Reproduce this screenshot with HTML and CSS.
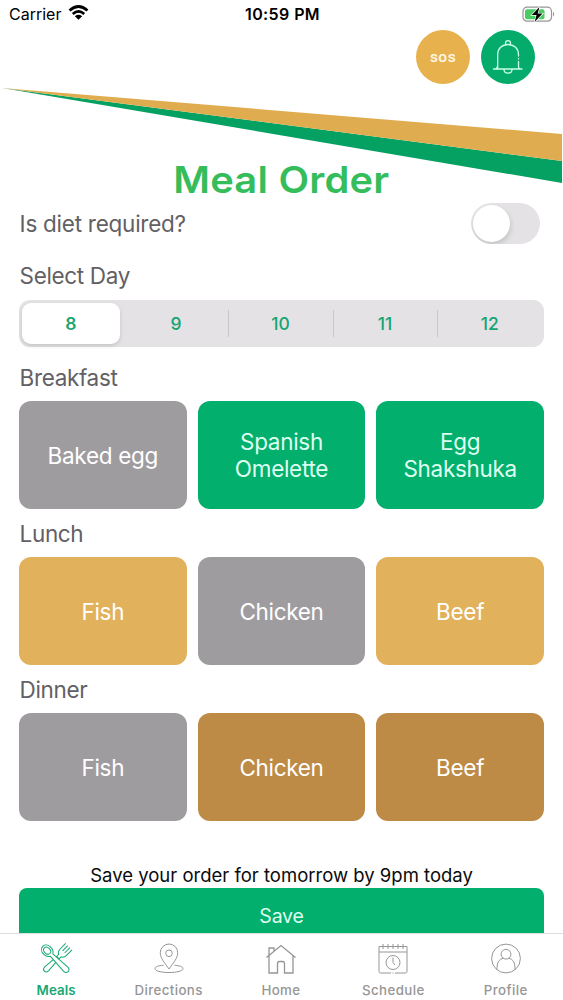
FILE: index.html
```html
<!DOCTYPE html>
<html lang="en">
<head>
<meta charset="utf-8">
<title>Meal Order</title>
<link rel="stylesheet" href="styles.css">
</head>
<body>
<div class="app">
  <svg class="swoosh" width="563" height="100" viewBox="0 0 563 100">
    <path d="M2 3 562 76V98Z" fill="#05a163"/>
    <path d="M2 3 562 49V76Z" fill="#dfad50"/>
  </svg>
  <header class="status">
    <div class="carrier"><span class="carrier-name">Carrier</span>
      <svg width="21" height="16" viewBox="0 0 22 16" fill="none" stroke="#000" stroke-width="2.9"><path d="M1.6 5.4Q11-3 20.4 5.4M5 9Q11 3.6 17 9"/><path d="M11 15.2 7.2 11.5Q11 8.4 14.8 11.5Z" fill="#000" stroke="none"/></svg>
    </div>
    <div class="time">10:59 PM</div>
    <svg class="battery" width="34" height="17" viewBox="0 0 34 17"><rect x="1" y="1.2" width="28.5" height="14" rx="4" fill="#fff" stroke="#969696" stroke-width="1.2"/><rect x="3" y="3.2" width="19.5" height="10" rx="2" fill="#4acb63"/><path d="M31.2 5.8q2 2.4 0 4.8z" fill="#777"/><path d="M17.4 1 9.8 9.1h4.7L12.7 16l7.8-8.4h-4.800z" fill="#000" stroke="#fff" stroke-width="1.3" paint-order="stroke"/></svg>
  </header>
  <div class="actions">
    <div class="round sos">sos</div>
    <div class="round alert">
      <svg width="32" height="36" viewBox="0 0 32 36" fill="none" stroke="#c9ffe6" stroke-width="1.3" stroke-linecap="round"><path d="M1.5 30H30M5.700 30V15.500C5.700 9.500 10 5.500 16 5.500S26.500 9.500 26.500 15.500V17M26.500 19.500v.4M26.500 22.500V27q0 3 1.500 3M5.700 26q0 3-2 4M13.500 5.500V4.200a2.500 2.500 0 0 1 5 0v1.300M12 30.500c0 4.800 8 4.800 8 0"/></svg>
    </div>
  </div>
  <h1 class="title"><span>Meal Order</span></h1>
  <main class="form">
    <div class="diet"><span class="label t-diet">Is diet required?</span><div class="toggle"><div class="knob"></div></div></div>
    <div class="label t-day">Select Day</div>
    <div class="days"><div class="day on">8</div><div class="day">9</div><div class="day">10</div><div class="day">11</div><div class="day">12</div></div>
    <div class="label meal-name t-break">Breakfast</div>
    <div class="meals"><div class="meal grey">Baked egg</div><div class="meal green"><span>Spanish<br>Omelette</span></div><div class="meal green"><span>Egg<br>Shakshuka</span></div></div>
    <div class="label meal-name">Lunch</div>
    <div class="meals"><div class="meal gold">Fish</div><div class="meal grey">Chicken</div><div class="meal gold">Beef</div></div>
    <div class="label meal-name">Dinner</div>
    <div class="meals"><div class="meal grey">Fish</div><div class="meal brown">Chicken</div><div class="meal brown">Beef</div></div>
    <p class="note">Save your order for tomorrow by 9pm today</p>
    <div class="save">Save</div>
  </main>
  <nav class="tabs">
    <div class="tab active"><svg width="34" height="34" viewBox="0 0 34 34"><g transform="translate(17.500 17) rotate(45)"><path d="M-1.500-2-2.700 14q0 3.200 2.700 3.200T2.700 14L1.500-2"/><path d="M-4.500-17.500V-10q0 4 2.800 5.200V-2H1.700V-4.800Q4.500-6 4.500-10V-17.500M-1.500-17.500V-10M1.500-17.500V-10"/></g><g transform="translate(16.500 17) rotate(-45)"><path d="M0-18c-3 0-5 2.800-5 6.200 0 3 1.400 5.300 3.300 6.300L-2.900 14.500q0 3.300 2.900 3.300T2.900 14.500L1.700-5.500C3.600-6.500 5-8.800 5-11.800 5-15.200 3-18 0-18Z" fill="#fff"/><path d="M0-15.800c-1.800 0-3 1.800-3 4s1.300 4 3 4 3-1.800 3-4-1.200-4-3-4Z"/></g></svg><span>Meals</span></div>
    <div class="tab"><svg width="34" height="34" viewBox="0 0 34 34"><path d="M17 27C12 20 8.300 16 8.300 10.700a8.700 8.700 0 0 1 17.400 0C25.700 16 22 20 17 27ZM11.500 23.200C6.500 23.700 3 24.700 3 26.500 3 29 9 30.500 17 30.500s14-1.500 14-4c0-1.800-3.500-2.800-8.500-3.300"/><circle cx="17" cy="11.300" r="3.300"/></svg><span>Directions</span></div>
    <div class="tab"><svg class="house" width="34" height="34" viewBox="0 0 34 34"><path d="M2.500 15.500 17 3.500 31.500 15.500M5 13.500V6h5v3.300M5 13.500V31h8.500V21.500q0-2 2-2h3q2 0 2 2V31H29V13.500"/></svg><span>Home</span></div>
    <div class="tab"><svg width="34" height="34" viewBox="0 0 34 34"><path d="M15 31H4.500q-1.500 0-1.500-1.500V4.500H31V29.500q0 1.500-1.500 1.500H19M16.500 31h1M3 10H31M7 2v5M12 2v5M17 2v5M22 2v5M27 2v5M17 15.500v5l2 2.500"/><circle cx="17" cy="20.500" r="7"/></svg><span>Schedule</span></div>
    <div class="tab"><svg width="34" height="34" viewBox="0 0 34 34"><circle cx="17" cy="16.500" r="14.400"/><circle cx="17" cy="12.200" r="4.900"/><path d="M8 27.700v-2q0-8.200 6.300-9.500M26 27.700v-2q0-8.200-6.300-9.500"/></svg><span>Profile</span></div>
  </nav>
</div>
</body>
</html>
```
FILE: styles.css
```css
* { box-sizing: border-box; }
body { margin: 0; background: #fff; font-family: Inter, "Liberation Sans", sans-serif; }
.app { position: relative; width: 563px; height: 1000px; overflow: hidden; display: flex; flex-direction: column; }
.swoosh { position: absolute; left: 0; top: 85px; }
.status { height: 30px; flex: none; display: grid; grid-template-columns: 1fr auto 1fr; padding: 4px 7px 0 9px; font-size: 16px; line-height: 20px; }
.carrier { display: flex; gap: 7px; }
.carrier-name { width: 52px; }
.carrier svg { margin-top: 1px; }
.time { font-weight: 600; letter-spacing: 0.4px; }
.battery { justify-self: end; margin-top: 2px; }
.actions { height: 54px; flex: none; display: flex; justify-content: flex-end; gap: 11px; padding-right: 28px; }
.round { width: 54px; height: 54px; border-radius: 50%; display: flex; align-items: center; justify-content: center; }
.sos { background: #e7b24d; color: #fff8e7; font: 500 15.5px Roboto, sans-serif; letter-spacing: 0.5px; }
.alert { background: #04ab6b; }
.title { position: relative; margin: 74px 0 0; height: 43px; flex: none; text-align: center; color: #35bd5b; font-size: 37px; line-height: 43px; font-weight: 600; letter-spacing: 0.2px; }
.title span { display: inline-block; transform: scaleX(1.078); }
.form { flex: 1; min-height: 0; overflow: hidden; padding: 1px 19px 0; display: flex; flex-direction: column; }
.label { color: #626064; font-size: 22.5px; line-height: 28px; letter-spacing: -0.35px; padding-left: 0.6px; }
.diet { height: 42px; flex: none; display: flex; align-items: center; justify-content: space-between; padding-right: 4px; }
.t-diet { letter-spacing: -0.25px; padding-top: 1px; }
.toggle { width: 69px; height: 41px; padding: 2px; border-radius: 21px; background: #e4e2e5; overflow: hidden; }
.knob { width: 37px; height: 37px; border-radius: 50%; background: #fff; box-shadow: 1px 3px 5px #0002; }
.t-day { margin-top: 18px; }
.days { margin-top: 10px; height: 47px; flex: none; display: grid; grid-template-columns: repeat(5, 1fr); padding: 3px 2px 3px 0; border-radius: 11px; background: #e4e2e5; }
.day { display: flex; align-items: center; justify-content: center; color: #17a473; font-size: 17.5px; font-weight: 500; position: relative; }
.day.on { margin: 0 4px 0 3px; background: #fff; border-radius: 9px; box-shadow: 0 2px 4px #0002; font-weight: 600; }
.day:nth-child(n+3)::before { content: ""; position: absolute; left: 0; top: 7px; bottom: 7px; width: 1px; background: #c9c7ca; }
.meal-name { height: 48px; flex: none; padding-top: 11px; }
.t-break { height: 54px; padding-top: 17px; }
.meals { height: 108px; flex: none; display: grid; grid-template-columns: repeat(3, 1fr); gap: 11px; }
.meal { display: flex; align-items: center; justify-content: center; text-align: center; border-radius: 12px; color: #fff; font-size: 22.5px; line-height: 27px; letter-spacing: -0.3px; }
.grey { background: #9f9c9f; }
.green { background: #02af6d; color: #dffff0; }
.gold { background: #e2b15b; }
.brown { background: #bd8b46; }
.note { margin: 40px 0 0; height: 27px; flex: none; text-align: center; font-size: 18.5px; line-height: 29px; color: #0b0b0b; }
.save { height: 54px; flex: none; background: #02af6d; color: #dffff0; border-radius: 8px; text-align: center; font-size: 19.5px; line-height: 56px; letter-spacing: -0.2px; }
.tabs { height: 67px; flex: none; border-top: 1px solid #dedede; display: grid; grid-template-columns: repeat(5, 112.4px); background: #fff; color: #969696; font-size: 13.3px; }
.tab { display: flex; flex-direction: column; align-items: center; padding-top: 8px; line-height: 18px; font-weight: 500; letter-spacing: 0.4px; }
.tab span { margin-top: 5px; }
.tab svg { fill: none; stroke: currentColor; stroke-width: 1; }
.tab .house { stroke-width: 1.3; }
.active { color: #17a873; }
.active span { font-weight: 600; letter-spacing: 0.1px; }
```
